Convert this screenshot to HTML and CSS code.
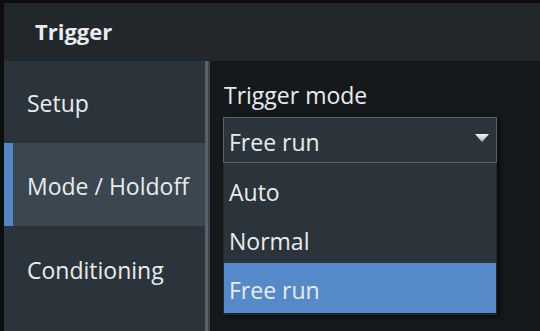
FILE: index.html
```html
<!DOCTYPE html>
<html lang="en">
<head>
  <meta charset="UTF-8" />
  <title>Trigger</title>
  <link rel="stylesheet" href="styles.css">
</head>
<body>
  <div class="dialog">
    <div class="header">Trigger</div>
    <div class="main">
      <div class="tabs">
        <div class="tab">Setup</div>
        <div class="tab active">Mode / Holdoff</div>
        <div class="tab tall">Conditioning</div>
      </div>
      <div class="divider"></div>
      <div class="content">
        <div class="field-label">Trigger mode</div>
        <div class="combo">
          <div class="combo-box">
            <span class="value">Free run</span>
            <svg class="arrow" width="14" height="8" viewBox="0 0 14 8">
              <defs>
                <linearGradient id="ag" x1="0" y1="0" x2="0" y2="1">
                  <stop offset="0" stop-color="#f4f6f8"/>
                  <stop offset="1" stop-color="#aab3bb"/>
                </linearGradient>
              </defs>
              <path d="M0 0 H14 L7 8 Z" fill="url(#ag)"/>
            </svg>
          </div>
          <div class="list">
            <div class="item">Auto</div>
            <div class="item">Normal</div>
            <div class="item selected">Free run</div>
          </div>
        </div>
      </div>
    </div>
  </div>
</body>
</html>
```

FILE: styles.css
```css
body {
  margin: 0;
  background: #0b0d0f;
  font-family: "Open Sans", "Noto Sans", sans-serif;
  color: #e9ecee;
  overflow: hidden;
}
.dialog {
  width: 540px;
  height: 328px;
  margin-top: 3px;
  margin-left: 4px;
  display: flex;
  flex-direction: column;
}
.header {
  height: 58px;
  background: #22272b;
  font-weight: bold;
  font-size: 22px;
  padding-left: 31px;
  line-height: 56px;
}
.main {
  flex: 1;
  display: flex;
}
.tabs {
  width: 201px;
  background: #2b343b;
  display: flex;
  flex-direction: column;
}
.tab {
  height: 82px;
  line-height: 84px;
  padding-left: 23px;
  font-size: 23px;
  box-sizing: border-box;
}
.tab.active {
  background: #3a4751;
  border-left: 9px solid #5288c8;
  padding-left: 14px;
  height: 83px;
  line-height: 87px;
}
.tab.tall {
  flex: 1;
  line-height: 88px;
}
.divider {
  width: 5px;
  background: linear-gradient(to right, #56636e 0, #56636e 3px, #3c4650 3px);
}
.content {
  flex: 1;
  background: #15191c;
  padding-left: 13px;
}
.field-label {
  font-size: 23px;
  margin-top: 18px;
  height: 38px;
  padding-left: 1px;
}
.combo {
  width: 274px;
  box-shadow: 3px 2px 4px rgba(0,0,0,0.5);
}
.combo-box {
  height: 44px;
  border: 1px solid #56626c;
  background: #2c353c;
  display: flex;
  align-items: center;
  justify-content: space-between;
  padding: 0 7px 0 5px;
  font-size: 23px;
}
.value {
  padding-top: 3px;
}
.arrow {
  margin-top: -5px;
}
.list {
  background: #2c343b;
  border: 1px solid #23292e;
  border-top: none;
  padding-top: 2px;
}
.item {
  height: 49px;
  line-height: 54px;
  padding-left: 5px;
  font-size: 23px;
}
.item.selected {
  background: #5689c9;
  height: 50px;
  border-bottom: 1px solid #1d2328;
}
```
